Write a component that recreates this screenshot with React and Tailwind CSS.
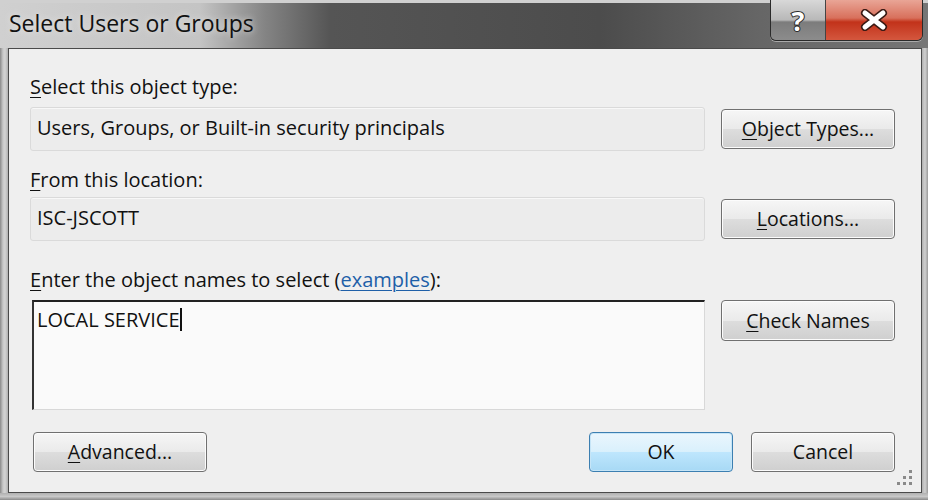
import React from 'react';

const font = { fontFamily: '"Open Sans", "Noto Sans", sans-serif' };

const Key = ({ children }) => <span className="underline underline-offset-[3px] decoration-1">{children}</span>;

const Button = ({ children, className = '', primary = false }) => (
  <button
    className={`h-[40px] rounded-[4px] border text-[19.5px] text-[#111] ${
      primary
        ? 'border-[#3c7fb1] bg-[linear-gradient(#eaf6fd_0%,#d9f0fc_50%,#bee6fd_51%,#a7d9f5_100%)] shadow-[inset_0_0_0_1px_#c6e5f7]'
        : 'border-[#707070] bg-[linear-gradient(#f6f6f6_0%,#eaeaea_50%,#dddddd_51%,#cfcfcf_100%)] shadow-[inset_0_0_0_1px_#fcfcfc]'
    } ${className}`}
  >
    {children}
  </button>
);

const ReadBox = ({ children }) => (
  <div className="h-[44px] w-[675px] rounded-[3px] border border-[#dadada] bg-[#ececec] px-[6px] pb-[3px] flex items-center text-[20px] text-[#111] shadow-[inset_0_1px_0_#f8f8f8]">
    {children}
  </div>
);

const Grip = () => (
  <svg width="16" height="18" viewBox="0 0 16 18" className="absolute right-[8px] bottom-[6px]">
    {[[12, 2], [12, 8], [6, 8], [12, 14], [6, 14], [0, 14]].map(([x, y], i) => (
      <rect key={i} x={x} y={y} width="3" height="3" fill="#8a8a8a" />
    ))}
  </svg>
);

export default function App() {
  return (
    <div className="w-[928px] h-[500px] flex flex-col bg-[#b8b8b8] overflow-hidden" style={font}>
      {/* title bar */}
      <div className="relative h-[48px] shrink-0 border-t-[3px] border-[#d0d0d0] bg-[linear-gradient(90deg,#d0d0d0_0px,#c4c4c4_200px,#848484_265px,#555555_330px,#4c4c4c_600px,#666666_760px,#767676_928px)] flex items-center">
        <span className="ml-[9px] -mt-[5px] text-[23px] text-[#111] [text-shadow:0_0_6px_#e8e8e8]">Select Users or Groups</span>
        <div className="absolute right-[5px] top-[-3px] flex h-[41px] rounded-b-[6px] border border-t-0 border-[#2a2a2a] overflow-hidden shadow-[0_1px_0_#aaa]">
          <div className="w-[55px] flex items-center justify-center border-r border-[#444] bg-[linear-gradient(#d8d8d8_0%,#b8b8b8_50%,#7c7c7c_55%,#8c8c8c_100%)]">
            <span className="text-[27px] font-bold text-white [-webkit-text-stroke:2px_#2a2a2a] [paint-order:stroke_fill] leading-none">?</span>
          </div>
          <div className="w-[96px] flex items-center justify-center bg-[linear-gradient(#e9a596_0%,#d8705c_45%,#c2321a_55%,#d4573e_100%)]">
            <svg width="28" height="22" viewBox="0 0 28 22">
              <path d="M5 4 L23 18 M23 4 L5 18" stroke="#3a1a14" strokeWidth="8" strokeLinecap="round" />
              <path d="M5 4 L23 18 M23 4 L5 18" stroke="#ffffff" strokeWidth="5" strokeLinecap="round" />
            </svg>
          </div>
        </div>
      </div>

      <div className="flex flex-1">
        {/* left frame */}
        <div className="w-[8px] shrink-0 bg-[linear-gradient(90deg,#8a8a8a_0px,#c8c8c8_3px,#d4d4d4_5px,#b0b0b0_8px)]" />
        {/* client area */}
        <div className="relative flex-1 border border-[#4a4a4a] bg-[#efefef] pl-[21px] text-[#111]">
          <div className="mt-[26px] h-[24px] flex items-center text-[20px]">
            <Key>S</Key>elect this object type:
          </div>
          <div className="mt-[8px] flex items-center gap-[16px]">
            <ReadBox>Users, Groups, or Built-in security principals</ReadBox>
            <Button className="w-[174px]"><Key>O</Key>bject Types...</Button>
          </div>

          <div className="mt-[17px] h-[24px] flex items-center text-[20px]">
            <Key>F</Key>rom this location:
          </div>
          <div className="mt-[5px] flex items-center gap-[16px]">
            <ReadBox>ISC-JSCOTT</ReadBox>
            <Button className="w-[174px]"><Key>L</Key>ocations...</Button>
          </div>

          <div className="mt-[27px] h-[24px] flex items-center text-[20px] whitespace-pre">
            <Key>E</Key>nter the object names to select (<span className="text-[#1e5fa8] underline underline-offset-[3px] decoration-1">examples</span>):
          </div>
          <div className="mt-[8px] flex items-start">
            <div className="ml-[2px] h-[110px] w-[673px] border-t-[2px] border-l-[2px] border-r border-b border-t-[#222] border-l-[#333] border-r-[#d8d8d8] border-b-[#d8d8d8] bg-[#fafafa] px-[3px] pt-[3px] text-[20px] text-[#111]">
              LOCAL SERVICE<span className="inline-block w-[2px] h-[23px] bg-[#111] align-[-4px]" />
            </div>
            <Button className="ml-[16px] w-[174px] h-[41px]"><Key>C</Key>heck Names</Button>
          </div>

          <div className="mt-[22px] flex items-center">
            <Button className="ml-[3px] w-[174px]"><Key>A</Key>dvanced...</Button>
            <Button primary className="ml-[382px] w-[144px]">OK</Button>
            <Button className="ml-[18px] w-[144px]">Cancel</Button>
          </div>
          <Grip />
        </div>
        {/* right frame */}
        <div className="w-[6px] shrink-0 bg-[linear-gradient(90deg,#b0b0b0_0px,#d0d0d0_3px,#9a9a9a_6px)]" />
      </div>
      {/* bottom frame */}
      <div className="h-[7px] shrink-0 bg-[linear-gradient(#b0b0b0,#c8c8c8_50%,#8a8a8a)]" />
    </div>
  );
}
